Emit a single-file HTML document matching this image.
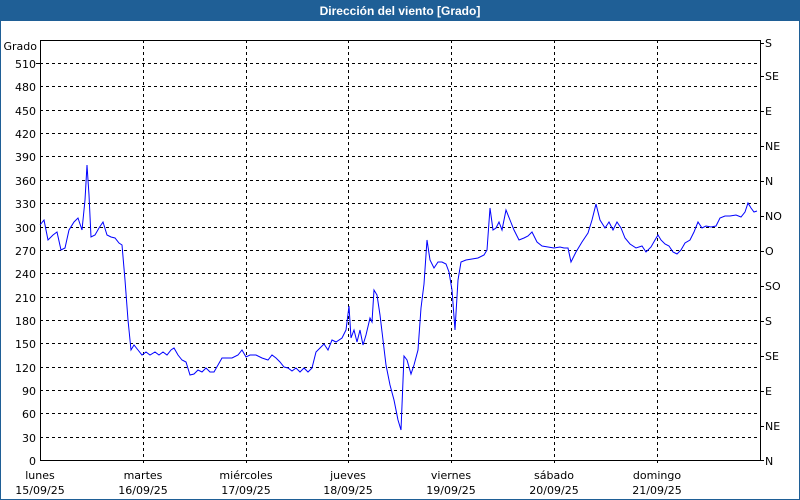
<!DOCTYPE html>
<html><head><meta charset="utf-8"><style>
html,body{margin:0;padding:0;background:#fff}
#w{position:relative;width:798px;height:498px;border:1px solid #1f5f96;background:#fff;overflow:hidden}
#t{position:absolute;left:0;top:0;width:798px;height:20px;background:#1f5f96;color:#fff;font:bold 12px "Liberation Sans",sans-serif;text-align:center;line-height:20px}
svg text{font-family:"DejaVu Sans","Liberation Sans",sans-serif;font-size:11px;fill:#000}
</style></head><body><div id="w"><div id="t">Dirección del viento [Grado]</div>
<svg width="800" height="500" style="position:absolute;left:-1px;top:-1px">
<g stroke="#000" stroke-dasharray="3,3" stroke-width="1">
<line x1="40" x2="760" y1="63.5" y2="63.5"/><line x1="40" x2="760" y1="86.5" y2="86.5"/><line x1="40" x2="760" y1="110.5" y2="110.5"/><line x1="40" x2="760" y1="133.5" y2="133.5"/><line x1="40" x2="760" y1="156.5" y2="156.5"/><line x1="40" x2="760" y1="180.5" y2="180.5"/><line x1="40" x2="760" y1="203.5" y2="203.5"/><line x1="40" x2="760" y1="227.5" y2="227.5"/><line x1="40" x2="760" y1="250.5" y2="250.5"/><line x1="40" x2="760" y1="273.5" y2="273.5"/><line x1="40" x2="760" y1="297.5" y2="297.5"/><line x1="40" x2="760" y1="320.5" y2="320.5"/><line x1="40" x2="760" y1="343.5" y2="343.5"/><line x1="40" x2="760" y1="367.5" y2="367.5"/><line x1="40" x2="760" y1="390.5" y2="390.5"/><line x1="40" x2="760" y1="413.5" y2="413.5"/><line x1="40" x2="760" y1="437.5" y2="437.5"/>
<line x1="143.5" x2="143.5" y1="40" y2="466"/><line x1="246.5" x2="246.5" y1="40" y2="466"/><line x1="348.5" x2="348.5" y1="40" y2="466"/><line x1="451.5" x2="451.5" y1="40" y2="466"/><line x1="554.5" x2="554.5" y1="40" y2="466"/><line x1="657.5" x2="657.5" y1="40" y2="466"/>
</g>
<path d="M40.5 40.5H760.5V460.5H40.5Z" fill="none" stroke="#000"/>
<g stroke="#000"><line x1="36" x2="40" y1="63.5" y2="63.5"/>
<line x1="760" x2="764" y1="43.5" y2="43.5"/><line x1="760" x2="764" y1="76.5" y2="76.5"/><line x1="760" x2="764" y1="111.5" y2="111.5"/><line x1="760" x2="764" y1="146.5" y2="146.5"/><line x1="760" x2="764" y1="181.5" y2="181.5"/><line x1="760" x2="764" y1="216.5" y2="216.5"/><line x1="760" x2="764" y1="251.5" y2="251.5"/><line x1="760" x2="764" y1="286.5" y2="286.5"/><line x1="760" x2="764" y1="321.5" y2="321.5"/><line x1="760" x2="764" y1="356.5" y2="356.5"/><line x1="760" x2="764" y1="391.5" y2="391.5"/><line x1="760" x2="764" y1="426.5" y2="426.5"/><line x1="760" x2="764" y1="460.5" y2="460.5"/></g>
<g text-anchor="end">
<text x="37" y="50">Grado</text>
<text x="36" y="68">510</text><text x="36" y="91">480</text><text x="36" y="115">450</text><text x="36" y="138">420</text><text x="36" y="161">390</text><text x="36" y="185">360</text><text x="36" y="208">330</text><text x="36" y="232">300</text><text x="36" y="255">270</text><text x="36" y="278">240</text><text x="36" y="302">210</text><text x="36" y="325">180</text><text x="36" y="348">150</text><text x="36" y="372">120</text><text x="36" y="395">90</text><text x="36" y="418">60</text><text x="36" y="442">30</text><text x="36" y="465">0</text></g>
<g><text x="765" y="47">S</text><text x="765" y="80">SE</text><text x="765" y="115">E</text><text x="765" y="150">NE</text><text x="765" y="185">N</text><text x="765" y="220">NO</text><text x="765" y="255">O</text><text x="765" y="290">SO</text><text x="765" y="325">S</text><text x="765" y="360">SE</text><text x="765" y="395">E</text><text x="765" y="430">NE</text><text x="765" y="465">N</text></g>
<g text-anchor="middle">
<text x="40" y="479">lunes</text><text x="40" y="494">15/09/25</text>
<text x="143" y="479">martes</text><text x="143" y="494">16/09/25</text>
<text x="246" y="479">miércoles</text><text x="246" y="494">17/09/25</text>
<text x="348" y="479">jueves</text><text x="348" y="494">18/09/25</text>
<text x="451" y="479">viernes</text><text x="451" y="494">19/09/25</text>
<text x="554" y="479">sábado</text><text x="554" y="494">20/09/25</text>
<text x="657" y="479">domingo</text><text x="657" y="494">21/09/25</text></g>
<polyline fill="none" stroke="#0000ff" stroke-width="1" points="40,225 44,220 48,240 53,235 57,232 61,250 65,248 69,230 74,222 78,218 82,230 85,200 87,165 89,195 91,237 95,235 99,228 103,222 107,235 111,237 115,238 119,243 122,245 125,280 128,320 131,350 134,345 138,350 142,355 146,352 150,355 155,352 159,355 163,352 167,355 171,350 174,348 178,355 182,360 186,362 190,375 194,374 198,370 202,372 206,368 210,372 214,372 218,365 222,358 226,358 232,358 238,355 242,350 246,357 250,355 256,355 262,358 268,360 272,355 276,358 280,362 284,367 288,368 292,371 296,368 300,372 304,368 308,372 312,368 316,352 320,348 324,344 328,350 332,340 336,342 342,338 346,330 349,306 351,338 354,330 357,342 360,330 363,345 366,335 370,318 372,322 374,290 377,295 380,315 383,340 386,365 390,385 394,400 398,420 401,430 404,356 407,360 411,374 414,365 418,350 421,308 424,284 427,240 430,260 434,268 438,262 442,262 446,264 449,272 452,290 455,330 458,280 461,262 466,260 472,259 478,258 484,255 487,250 490,208 493,230 496,228 499,222 502,230 506,210 510,220 514,230 519,240 524,238 528,236 532,232 537,242 542,246 548,247 554,248 560,247 564,248 568,248 571,262 576,252 582,242 588,233 592,220 596,204 600,220 605,228 609,222 613,230 617,222 621,228 625,238 630,244 636,248 642,246 646,252 651,247 655,240 658,235 661,240 665,244 669,246 673,252 677,254 681,250 685,243 690,240 694,232 698,222 702,228 706,226 711,227 716,226 720,218 725,216 730,216 736,215 741,217 745,212 748,203 751,208 754,212 757,211"/>
</svg></div></body></html>
